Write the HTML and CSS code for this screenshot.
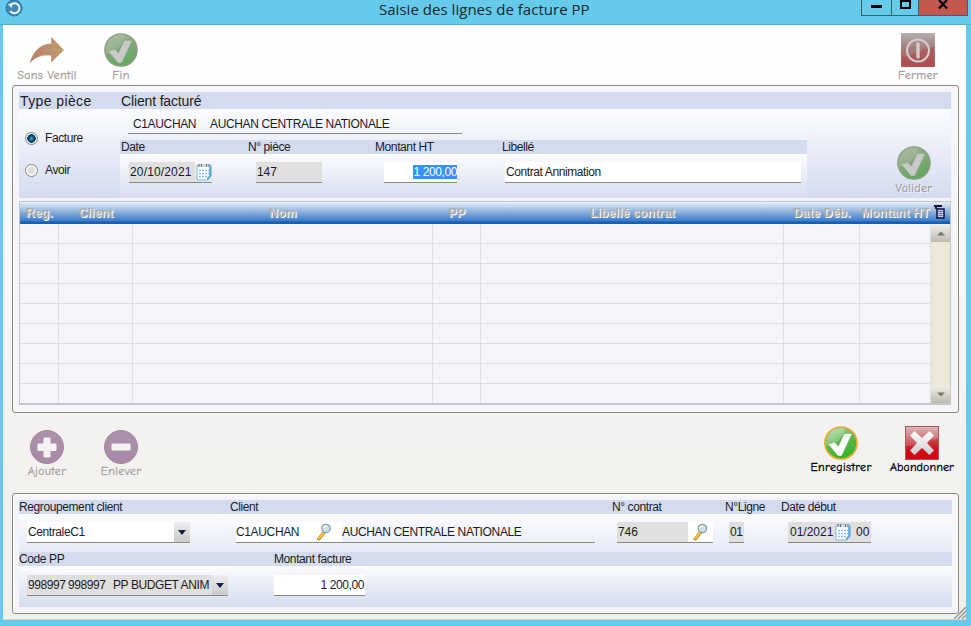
FILE: index.html
```html
<!DOCTYPE html>
<html lang="fr">
<head>
    <meta charset="UTF-8">
    <meta name="viewport" content="width=device-width, initial-scale=1.0">
    <title>Saisie des lignes de facture PP</title>
    <link rel="stylesheet" href="styles.css">
</head>
<body>
    <!-- shared icons -->
    <svg class="defs" width="0" height="0">
        <defs>
            <linearGradient id="dimGreen" x1="0" y1="0" x2="0.4" y2="1">
                <stop offset="0" stop-color="#a9b8a2"/>
                <stop offset="0.5" stop-color="#83a87c"/>
                <stop offset="1" stop-color="#66a863"/>
            </linearGradient>
            <linearGradient id="green" x1="0" y1="0" x2="0.4" y2="1">
                <stop offset="0" stop-color="#b9dfae"/>
                <stop offset="0.5" stop-color="#5fb653"/>
                <stop offset="1" stop-color="#35b52c"/>
            </linearGradient>
            <linearGradient id="arrow" x1="0" y1="0" x2="1" y2="0">
                <stop offset="0" stop-color="#b98072"/>
                <stop offset="1" stop-color="#c09c68"/>
            </linearGradient>
            <linearGradient id="mauve" x1="0" y1="0" x2="0" y2="1">
                <stop offset="0" stop-color="#ab93aa"/>
                <stop offset="1" stop-color="#a889a6"/>
            </linearGradient>
            <linearGradient id="dimRed" x1="0" y1="0" x2="0" y2="1">
                <stop offset="0" stop-color="#b3aeac"/>
                <stop offset="0.45" stop-color="#a57d7b"/>
                <stop offset="1" stop-color="#b45052"/>
            </linearGradient>
            <linearGradient id="red" x1="0" y1="0" x2="0" y2="1">
                <stop offset="0" stop-color="#d6a9aa"/>
                <stop offset="0.4" stop-color="#c0474d"/>
                <stop offset="0.7" stop-color="#cf0e1a"/>
                <stop offset="1" stop-color="#d8000c"/>
            </linearGradient>
            <linearGradient id="cross" x1="0" y1="0" x2="0" y2="1">
                <stop offset="0" stop-color="#ffffff"/>
                <stop offset="1" stop-color="#cdcdcd"/>
            </linearGradient>
        </defs>
        <symbol id="check-dim" viewBox="0 0 34 34">
            <circle cx="17" cy="17" r="16.2" fill="url(#dimGreen)" stroke="#8f9f83" stroke-width="1.2"/>
            <path d="M2 21C9 20 18 14 22 2A16 16 0 0 0 2 21Z" fill="#b4c1ad" opacity=".4"/>
            <path d="M5 18.500L11 17L14.500 21L20.500 8H27.500L17.500 29.500H14Z" fill="#c9c9c9" stroke="#c3c6c1" stroke-width=".6"/>
        </symbol>
        <symbol id="check" viewBox="0 0 34 34">
            <circle cx="17" cy="17" r="16" fill="url(#green)" stroke="#f0a82c" stroke-width="1.700"/>
            <path d="M2.500 20C10 19 18 14 21 2.500A15 15 0 0 0 2.500 20Z" fill="#fff" opacity=".25"/>
            <path d="M5 18.500L11 17L14.500 21L20.500 8H27.500L17.500 29.500H14Z" fill="#fff" stroke="#fff" stroke-width=".4"/>
        </symbol>
        <symbol id="calendar" viewBox="0 0 16 18">
            <path d="M1 2H15V13L11.500 17H1Z" fill="#fdfeff" stroke="#7fb3d8"/>
            <path d="M15 2.500V13L11.500 17V14.500L13.500 13V3" fill="#5eaee0" stroke="#4a90c4" stroke-width=".5"/>
            <path d="M1.500 3H14.500" stroke="#cbd9e3" stroke-width="2"/>
            <path d="M3 1V4M5.500 1V4M10.500 1V4M13 1V4" stroke="#6b7178" stroke-width="1"/>
            <path d="M3 7.500H13M3 10.500H13M3 13.500H11" stroke="#8ebcec" stroke-width="1.600" stroke-dasharray="2 1"/>
        </symbol>
        <symbol id="loupe" viewBox="0 0 14 18">
            <path d="M7 9.500L1.800 15.800" stroke="#b97d1e" stroke-width="3.400" stroke-linecap="round"/>
            <path d="M6.500 10L2 15.300" stroke="#ffc63c" stroke-width="2.200" stroke-linecap="round"/>
            <circle cx="9" cy="5.500" r="4.200" fill="#c8e0f0" stroke="#8f9ba3" stroke-width="1.300"/>
            <path d="M6.500 5A3 3 0 0 1 9.500 2.800" fill="none" stroke="#fff" stroke-width="1.300"/>
        </symbol>
    </svg>

    <div class="window">
        <div class="titlebar">
            <svg class="app-icon" width="18" height="18" viewBox="0 0 18 18">
                <circle cx="9" cy="9" r="8.500" fill="#3f89b8"/>
                <circle cx="9" cy="9" r="7.800" fill="none" stroke="#2d668f" stroke-dasharray="2 2"/>
                <path d="M5.500 6.200A5 5 0 1 1 5.300 12" fill="none" stroke="#f2faff" stroke-width="2"/>
                <path d="M3 5L8 4L6.500 9Z" fill="#f2faff"/>
            </svg>
            <h1>Saisie des lignes de facture PP</h1>
            <div class="win-buttons">
                <span class="win-btn min"><svg width="12" height="14" viewBox="0 0 12 14"><path d="M0 6.500H11" stroke="#000" stroke-width="3"/></svg></span>
                <span class="win-btn max"><svg width="12" height="14" viewBox="0 0 12 14"><path d="M2 1H11V8H2Z" fill="none" stroke="#000" stroke-width="2"/></svg></span>
                <span class="win-btn close"><svg width="12" height="14" viewBox="0 0 12 14"><path d="M2 0L10 8.500M10 0L2 8.500" stroke="#000" stroke-width="2.200"/></svg></span>
            </div>
        </div>

        <div class="client">
            <div class="toolbar top">
                <div class="tool ventil off">
                    <svg width="34" height="34" viewBox="0 0 34 34"><path d="M0 29.500C4 17 12 10.500 21.500 11V4.500L33.500 17L21.500 29V22.500C13 21 6 23.500 0 29.500Z" fill="url(#arrow)" stroke="#b88c70" stroke-width=".6"/></svg>
                    <span>Sans Ventil</span>
                </div>
                <div class="tool fin off">
                    <svg width="34" height="34"><use href="#check-dim"/></svg>
                    <span>Fin</span>
                </div>
                <div class="tool fermer off">
                    <svg width="34" height="34" viewBox="0 0 34 34">
                        <rect width="34" height="34" rx="1" fill="url(#dimRed)"/>
                        <path d="M1 24C14 24 20 14 33 14V33H1Z" fill="#ad4649" opacity=".5"/>
                        <circle cx="17" cy="17.500" r="11" fill="none" stroke="#d3cfcf" stroke-width="2"/>
                        <path d="M17 11V24" stroke="#d3cfcf" stroke-width="3.400" stroke-linecap="round"/>
                    </svg>
                    <span>Fermer</span>
                </div>
            </div>

            <div class="panel invoice">
                <div class="strip big">
                    <span class="type-title">Type pièce</span>
                    <span class="client-title">Client facturé</span>
                </div>
                <div class="invoice-body">
                    <div class="radios">
                        <label><i class="radio on"></i><span>Facture</span></label>
                        <label><i class="radio"></i><span>Avoir</span></label>
                    </div>
                    <div class="details">
                        <div class="customer"><span class="code">C1AUCHAN</span><span>AUCHAN CENTRALE NATIONALE</span></div>
                        <div class="strip cols">
                            <span>Date</span><span>N° pièce</span><span>Montant HT</span><span>Libellé</span>
                        </div>
                        <div class="cols fields">
                            <div class="field date"><span class="ro">20/10/2021</span><svg width="16" height="18"><use href="#calendar"/></svg></div>
                            <div class="field ro piece"><span>147</span></div>
                            <div class="field white amount"><span class="selected">1 200,00</span></div>
                            <div class="field white libelle"><span>Contrat Annimation</span></div>
                        </div>
                    </div>
                    <div class="tool valider off">
                        <svg width="34" height="34"><use href="#check-dim"/></svg>
                        <span>Valider</span>
                    </div>
                </div>

                <div class="grid">
                    <div class="grid-head">
                        <span>Reg.</span><span>Client</span><span>Nom</span><span>PP</span><span>Libellé contrat</span><span>Date Déb.</span><span>Montant HT</span>
                        <svg width="11" height="14" viewBox="0 0 11 14">
                            <path d="M0 1H8M2 1V4" stroke="#101030" stroke-width="2" fill="none"/>
                            <path d="M3 4H10V13H3Z" fill="#c2caff" stroke="#101030" stroke-width="1.500"/>
                            <path d="M4.500 6.500H8.500M4.500 8.500H8.500M4.500 10.500H8.500" stroke="#5a68c4"/>
                        </svg>
                    </div>
                    <div class="grid-body">
                        <div class="rows">
                            <div class="row"><i></i><i></i><i></i><i></i><i></i><i></i><i></i></div>
                            <div class="row"><i></i><i></i><i></i><i></i><i></i><i></i><i></i></div>
                            <div class="row"><i></i><i></i><i></i><i></i><i></i><i></i><i></i></div>
                            <div class="row"><i></i><i></i><i></i><i></i><i></i><i></i><i></i></div>
                            <div class="row"><i></i><i></i><i></i><i></i><i></i><i></i><i></i></div>
                            <div class="row"><i></i><i></i><i></i><i></i><i></i><i></i><i></i></div>
                            <div class="row"><i></i><i></i><i></i><i></i><i></i><i></i><i></i></div>
                            <div class="row"><i></i><i></i><i></i><i></i><i></i><i></i><i></i></div>
                            <div class="row"><i></i><i></i><i></i><i></i><i></i><i></i><i></i></div>
                        </div>
                        <div class="scrollbar">
                            <span class="scroll-btn"><svg width="8" height="5" viewBox="0 0 8 5"><path d="M0 4.500L4 .5L8 4.500Z" fill="#77776f"/></svg></span>
                            <span class="scroll-btn"><svg width="8" height="5" viewBox="0 0 8 5"><path d="M0 .5L4 4.500L8 .5Z" fill="#77776f"/></svg></span>
                        </div>
                    </div>
                </div>
            </div>

            <div class="toolbar middle">
                <div class="tool ajouter off">
                    <svg width="34" height="34" viewBox="0 0 34 34"><circle cx="17" cy="17" r="16.500" fill="url(#mauve)" stroke="#a08a9f"/><path d="M14 8H20V14H26V20.500H20V27H14V20.500H8V14H14Z" fill="#f5f3f3" stroke="#f5f3f3" stroke-linejoin="round"/></svg>
                    <span>Ajouter</span>
                </div>
                <div class="tool enlever off">
                    <svg width="34" height="34" viewBox="0 0 34 34"><circle cx="17" cy="17" r="16.500" fill="url(#mauve)" stroke="#a08a9f"/><rect x="7.500" y="13.500" width="19" height="7" rx="1" fill="#f5f3f3"/></svg>
                    <span>Enlever</span>
                </div>
                <div class="tool enregistrer">
                    <svg width="34" height="34"><use href="#check"/></svg>
                    <span>Enregistrer</span>
                </div>
                <div class="tool abandonner">
                    <svg width="34" height="34" viewBox="0 0 34 34">
                        <rect x=".5" y=".5" width="33" height="33" fill="url(#red)" stroke="#a95559"/>
                        <path d="M1 20C12 21 20 13 33 13V1H1Z" fill="#fff" opacity=".2"/>
                        <path d="M5 9.500L9.500 5L17 12L24.500 5L29 9.500L22 17L29 24.500L24.500 29L17 22L9.500 29L5 24.500L12 17Z" fill="url(#cross)"/>
                    </svg>
                    <span>Abandonner</span>
                </div>
            </div>

            <div class="panel line">
                <div class="strip line-cols">
                    <span>Regroupement client</span><span>Client</span><span>N° contrat</span><span>N°Ligne</span><span>Date début</span>
                </div>
                <div class="line-cols line-fields">
                    <div class="field white regroup"><span>CentraleC1</span><b class="arrow"></b></div>
                    <div class="field search"><span class="white code">C1AUCHAN</span><svg width="14" height="18"><use href="#loupe"/></svg><span>AUCHAN CENTRALE NATIONALE</span></div>
                    <div class="field contract"><span class="ro">746</span><svg width="14" height="18"><use href="#loupe"/></svg></div>
                    <div class="field ro num"><span>01</span></div>
                    <div class="field ro debut"><span class="month">01/2021</span><svg width="16" height="18"><use href="#calendar"/></svg><span>00</span></div>
                </div>
                <div class="strip code-cols">
                    <span>Code PP</span><span>Montant facture</span>
                </div>
                <div class="code-cols code-fields">
                    <div class="field ro code-pp"><span class="pp-from">998997</span><span class="pp-to">998997</span><span>PP BUDGET ANIM</span><b class="arrow"></b></div>
                    <div class="field white total"><span>1 200,00</span></div>
                </div>
            </div>
            <svg class="grip" width="12" height="12" viewBox="0 0 12 12"><path d="M0 12L12 0M4 12L12 4M8 12L12 8" stroke="#8f8f8f" stroke-width="1.300"/></svg>
        </div>
    </div>
</body>
</html>
```
FILE: styles.css
```css
* {
    box-sizing: border-box;
}
body {
    margin: 0;
    font-family: "Liberation Sans", Arial, sans-serif;
    font-size: 12px;
    letter-spacing: -0.4px;
    color: #1b1b1f;
}
.defs {
    position: absolute;
}
.window {
    width: 971px;
    height: 626px;
    overflow: hidden;
    background: #66cbea;
}

/* title bar */
.titlebar {
    display: flex;
    height: 25px;
    padding-left: 5px;
    border-bottom: 1px solid #56adc9;
}
.titlebar h1 {
    margin: 0 0 0 356px;
    width: 482px;
    font: 15px/18px "Open Sans", sans-serif;
    letter-spacing: 0.03px;
    color: #10272f;
    white-space: nowrap;
}
.app-icon {
    margin-top: -1px;
}
.win-buttons {
    display: flex;
    width: 107px;
    height: 16px;
    border: 1px solid #35626f;
    border-top: 0;
}
.win-btn {
    display: flex;
    justify-content: center;
    border-right: 1px solid #35626f;
}
.win-btn.min {
    width: 30px;
}
.win-btn.max {
    width: 27px;
}
.win-btn.close {
    flex: 1;
    border: 0;
    background: #c3584e;
}

.client {
    position: relative;
    width: 963px;
    height: 595px;
    margin-left: 3px;
    padding: 0 7px 0 9px;
    border-bottom: 1px solid #d8d2c8;
    background: linear-gradient(#fff, #fefefe 8%, #f3f2f0 70%, #f0efec);
}

/* icon buttons */
.toolbar {
    display: flex;
}
.toolbar.top {
    height: 60px;
    padding-top: 8px;
}
.toolbar.middle {
    height: 80px;
    padding-top: 17px;
}
.tool {
    display: flex;
    flex-direction: column;
    align-items: center;
    width: 74px;
    font: 12px/14px "Comic Sans MS", "Comic Neue", Lato, sans-serif;
    letter-spacing: 0.35px;
    color: #000;
    white-space: nowrap;
    -webkit-text-stroke: 0.3px;
}
.tool svg {
    flex: none;
}
.tool span {
    margin-top: 1px;
}
.tool.off {
    color: #a5a09d;
    text-shadow: 1px 1px #fff;
}
.ventil, .ajouter {
    margin-left: -2px;
}
.fermer {
    margin-left: auto;
    margin-right: 4px;
}
.enregistrer {
    margin: -4px 0 0 auto;
}
.abandonner {
    margin: -4px 0 0 7px;
    letter-spacing: 0.1px;
}
.enregistrer span, .abandonner span {
    margin-top: 0;
}
.middle .off span {
    margin-top: 0;
}

/* panels */
.panel {
    border: 1px solid #8b8a79;
    border-radius: 3px;
    background: #f4f5fb;
    box-shadow: inset 0 0 0 1px #fafaff;
    padding: 6px 7px 0 6px;
}
.panel.invoice {
    height: 328px;
}
.panel.line {
    height: 121px;
    padding-right: 6px;
}
.strip {
    height: 14px;
    line-height: 14px;
    background: #d5dbef;
    white-space: nowrap;
}
.strip.big {
    display: flex;
    height: 17px;
    font-size: 14px;
    line-height: 18px;
}
.type-title {
    width: 102px;
    padding-left: 1px;
    letter-spacing: 0.4px;
}
.client-title {
    letter-spacing: -0.15px;
}

.invoice-body {
    display: flex;
    height: 89px;
    background: linear-gradient(#fbfcff, #d5dbef);
}
.radios {
    width: 101px;
    padding: 20px 0 0 6px;
}
.radios label {
    display: flex;
    align-items: center;
    gap: 7px;
    height: 18px;
    margin-bottom: 14px;
}
.radio {
    width: 13px;
    height: 13px;
    border: 1px solid #858585;
    border-radius: 50%;
    background: radial-gradient(#ddd 35%, #fff 65%, #d5d5d5);
}
.radio.on {
    background: radial-gradient(circle at 50% 50%, #3ba5d8 0, #0b4268 3px, #0b3658 4px, #eee 4.5px);
}
.details {
    flex: none;
    width: 687px;
}
.customer {
    display: flex;
    width: 334px;
    height: 25px;
    margin: 0 0 6px 8px;
    padding-left: 5px;
    line-height: 30px;
    border-bottom: 1px solid #8b8a79;
    white-space: nowrap;
}
.customer .code {
    width: 77px;
}
.customer, .search {
    letter-spacing: -0.36px;
}
.radios {
    flex: none;
}
.cols {
    display: grid;
    grid-template-columns: 127px 127px 127px 306px;
}
.cols.strip span {
    padding-left: 1px;
}
.fields {
    height: 44px;
    padding-top: 8px;
    background: linear-gradient(#fbfcff, #d9def0);
}
.field {
    display: flex;
    height: 21px;
    line-height: 21px;
    border-bottom: 1px solid #8b8a79;
    white-space: nowrap;
}
.ro {
    background: #dfdfdf;
}
.white {
    background: #fff;
}
.fields .field {
    margin-left: 9px;
}
.date {
    width: 83px;
    letter-spacing: 0.15px;
}
.date span {
    width: 66px;
    margin-right: 1px;
    padding-left: 1px;
}
.date svg {
    margin-top: 1px;
}
.piece {
    width: 66px;
    padding-left: 1px;
    letter-spacing: -0.1px;
}
.fields .amount {
    width: 73px;
    margin-left: 10px;
    justify-content: flex-end;
}
.selected {
    height: 14px;
    margin-top: 3px;
    line-height: 15px;
    background: #3393f8;
    color: #fff;
}
.fields .libelle {
    width: 296px;
    margin-left: 4px;
    padding-left: 1px;
}
.valider {
    margin-left: 70px;
    padding-top: 37px;
}

/* grid */
.grid {
    height: 204px;
    margin-top: 3px;
    border: 1px solid #c4c5ca;
    border-bottom-width: 2px;
}
.grid-head, .row {
    display: grid;
    grid-template-columns: 39px 74px 300px 48px 303px 76px 71px;
}
.grid-head {
    grid-template-columns: 39px 74px 300px 48px 303px 76px 71px 19px;
    height: 22px;
    line-height: 22px;
    letter-spacing: 0.2px;
    text-align: center;
    color: #b1aeab;
    text-shadow: 1px 1px #fff;
    background: linear-gradient(#e7f1fa, #91b4dc 45%, #3b7dcc 90%, #1260bd 95%);
    border-bottom: 1px solid #1260bd;
    white-space: nowrap;
}
.grid-head span {
    font-weight: bold;
}
.grid-head svg {
    margin: 3px 0 0 3px;
}
.grid-body {
    display: flex;
    height: 179px;
}
.rows {
    width: 911px;
    display: flex;
    flex-direction: column;
}
.row {
    flex: 1;
    border-bottom: 1px solid #dfdfe1;
}
.row:last-child {
    border-bottom: 0;
}
.row i {
    border-right: 1px solid #dfdfe3;
}
.scrollbar {
    display: flex;
    flex-direction: column;
    justify-content: space-between;
    flex: 1;
    background: #ebe8d8;
}
.scroll-btn {
    display: flex;
    align-items: center;
    justify-content: center;
    height: 18px;
    background: linear-gradient(#f0efec, #bebbb0);
}

/* line entry */
.line-cols {
    display: grid;
    grid-template-columns: 211px 382px 113px 56px 1fr;
}
.line-fields {
    height: 38px;
    padding-top: 8px;
    background: linear-gradient(#fbfcff, #e7eaf6);
}
.arrow {
    display: flex;
    align-items: center;
    justify-content: center;
    width: 16px;
    margin-left: auto;
    background: linear-gradient(#eee, #c9c9c9);
}
.arrow::before {
    content: "";
    border: 4px solid transparent;
    border-top: 5px solid #10233f;
    border-bottom: 0;
}
.regroup {
    width: 163px;
    margin-left: 8px;
    padding-left: 1px;
}
.search {
    width: 359px;
    margin-left: 6px;
}
.search .code {
    width: 75px;
}
.search svg, .contract svg {
    width: 25px;
    height: 20px;
    padding: 1px 5px;
    background: #fff;
}
.search svg {
    width: 31px;
    padding: 1px 11px 1px 6px;
}
.contract {
    width: 96px;
    margin-left: 5px;
}
.contract .ro {
    width: 72px;
    padding-left: 1px;
    letter-spacing: -0.1px;
}
.num {
    width: 15px;
    margin-left: 4px;
    padding-left: 1px;
}
.debut {
    width: 83px;
    margin-left: 7px;
    padding-left: 2px;
    letter-spacing: 0;
}
.debut svg {
    margin: 1px 5px 0 1px;
}
.debut .month {
    width: 44px;
}
.code-cols {
    display: grid;
    grid-template-columns: 255px 1fr;
}
.code-fields {
    height: 41px;
    padding-top: 9px;
    background: linear-gradient(#fbfcff, #d5dbef);
}
.code-pp {
    width: 201px;
    margin-left: 8px;
    padding-left: 1px;
}
.pp-from {
    width: 40px;
}
.pp-to {
    width: 45px;
}
.total {
    width: 91px;
    padding-right: 1px;
    justify-content: flex-end;
}
.grip {
    position: absolute;
    right: 0;
    bottom: 0;
}
```
